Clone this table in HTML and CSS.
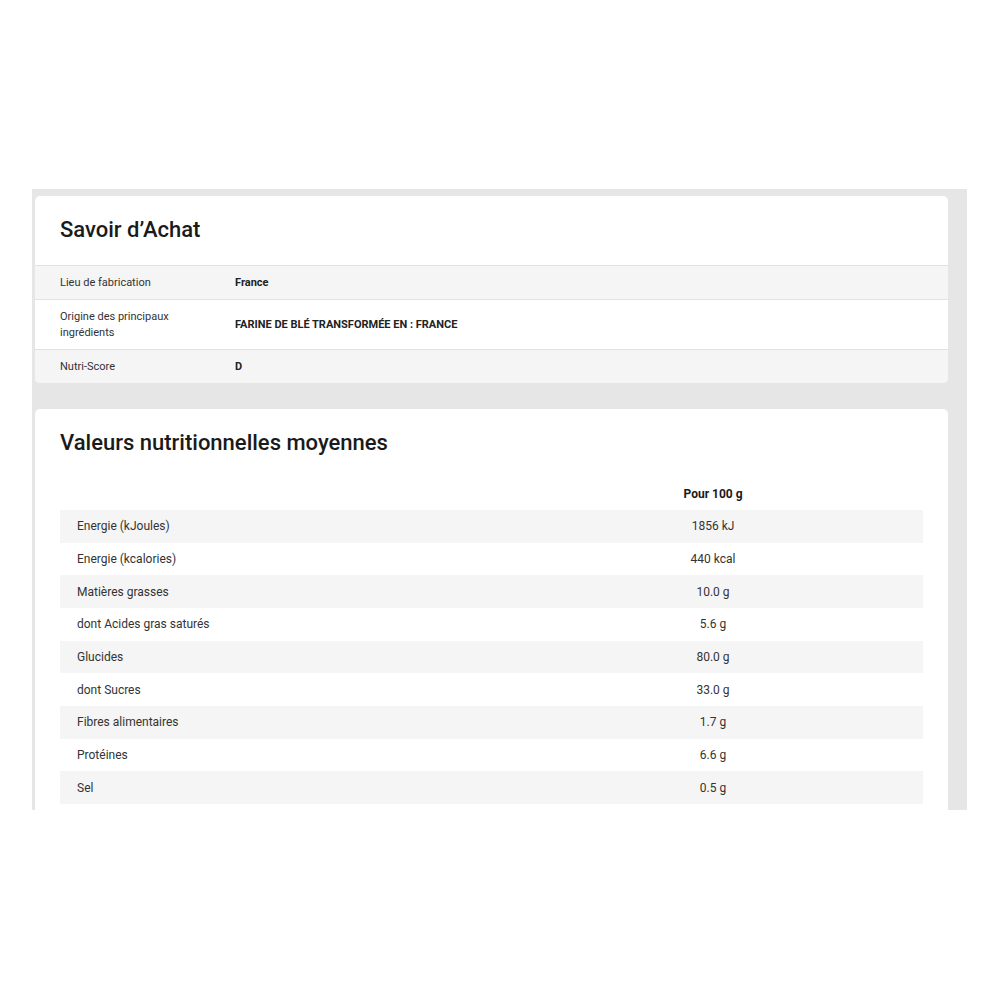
FILE: index.html
```html
<!DOCTYPE html>
<html lang="fr">
<head>
<meta charset="utf-8">
<title>Savoir d'Achat</title>
<link rel="stylesheet" href="styles.css">
</head>
<body>
<div class="page">
  <section class="panel">
    <div class="card card-info">
      <h2 class="card-title">Savoir d’Achat</h2>
      <div class="info-row alt">
        <div class="info-label">Lieu de fabrication</div>
        <div class="info-value">France</div>
      </div>
      <div class="info-row tall">
        <div class="info-label">Origine des principaux<br>ingrédients</div>
        <div class="info-value">FARINE DE BLÉ TRANSFORMÉE EN : FRANCE</div>
      </div>
      <div class="info-row alt">
        <div class="info-label">Nutri-Score</div>
        <div class="info-value">D</div>
      </div>
    </div>

    <div class="card card-nutri">
      <h2 class="card-title nutri-title">Valeurs nutritionnelles moyennes</h2>
      <div class="nutri-table">
        <div class="nutri-row head">
          <div class="n-label"></div>
          <div class="n-value">Pour 100 g</div>
        </div>
        <div class="nutri-row alt"><div class="n-label">Energie (kJoules)</div><div class="n-value">1856 kJ</div></div>
        <div class="nutri-row"><div class="n-label">Energie (kcalories)</div><div class="n-value">440 kcal</div></div>
        <div class="nutri-row alt"><div class="n-label">Matières grasses</div><div class="n-value">10.0 g</div></div>
        <div class="nutri-row"><div class="n-label">dont Acides gras saturés</div><div class="n-value">5.6 g</div></div>
        <div class="nutri-row alt"><div class="n-label">Glucides</div><div class="n-value">80.0 g</div></div>
        <div class="nutri-row"><div class="n-label">dont Sucres</div><div class="n-value">33.0 g</div></div>
        <div class="nutri-row alt"><div class="n-label">Fibres alimentaires</div><div class="n-value">1.7 g</div></div>
        <div class="nutri-row"><div class="n-label">Protéines</div><div class="n-value">6.6 g</div></div>
        <div class="nutri-row alt"><div class="n-label">Sel</div><div class="n-value">0.5 g</div></div>
      </div>
    </div>
  </section>
</div>
</body>
</html>
```
FILE: styles.css
```css
* { box-sizing: border-box; }
html, body { margin: 0; padding: 0; background: #fff; }
body {
  font-family: Roboto, "Liberation Sans", Arial, sans-serif;
  color: #333;
}
.page {
  padding-top: 189px;
  padding-left: 32px;
}
.panel {
  width: 935px;
  height: 621px;
  overflow: hidden;
  background: #e6e6e6;
  padding: 7px 19px 0 3px;
  display: flex;
  flex-direction: column;
  gap: 26px;
}
.card {
  background: #fff;
  border-radius: 5px;
  flex-shrink: 0;
}
.card-info {
  overflow: hidden;
}
.card-nutri {
  padding-bottom: 40px;
}
.card-title {
  margin: 0;
  font-size: 22px;
  font-weight: 500;
  color: #1a1a1a;
  line-height: 30px;
  padding: 19px 25px 20px;
}
.info-row {
  display: flex;
  align-items: center;
  height: 34px;
  border-top: 1px solid #e2e2e2;
  padding: 0 25px;
  font-size: 11px;
}
.info-row.tall { height: 50px; }
.info-row.alt { background: #f5f5f5; }
.info-label {
  width: 175px;
  line-height: 16px;
  color: #333;
}
.info-value {
  font-weight: 700;
  color: #222;
}
.nutri-title {
  padding: 19px 25px 19px;
}
.nutri-table {
  padding: 0 25px;
  font-size: 12px;
}
.nutri-row {
  display: grid;
  grid-template-columns: 1fr 420px;
  align-items: center;
  height: 32.67px;
}
.nutri-row.head {
  height: 33px;
  font-weight: 700;
  color: #1a1a1a;
}
.nutri-row.alt { background: #f5f5f5; }
.n-label {
  padding-left: 17px;
  color: #333;
}
.n-value {
  text-align: center;
  color: #333;
}
.head .n-value { color: #1a1a1a; }
```
